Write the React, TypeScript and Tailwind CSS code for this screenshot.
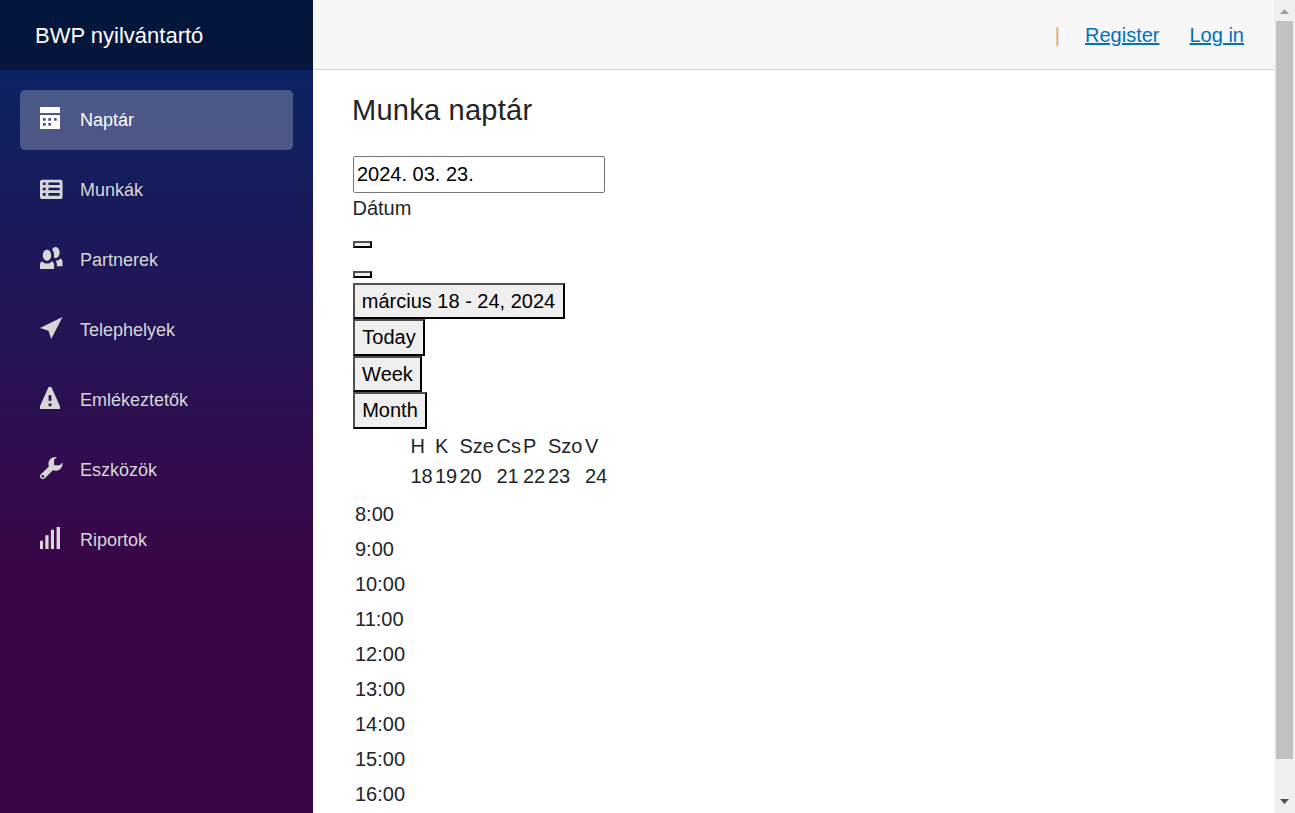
import React from "react";

type NavItem = { label: string; path: string; active?: boolean; narrow?: boolean };

const NAV: NavItem[] = [
  {
    label: "Naptár",
    active: true,
    narrow: true,
    path: "M0 0v2.18h7v-2.18h-7zm0 2.91v5.09h7v-5.09h-7zm1.05 1.09h.95v1h-.95v-1zm1.85 0h.95v1h-.95v-1zm2 0h.95v1h-.95v-1zm-3.85 1.85h.95v1h-.95v-1zm1.85 0h.95v1h-.95v-1z",
  },
  {
    label: "Munkák",
    path: "M.75 1c-.41 0-.75.34-.75.75v5.5c0 .41.34.75.75.75h6.5c.41 0 .75-.34.75-.75v-5.5c0-.41-.34-.75-.75-.75h-6.5zm.25 1h1v.95h-1v-.95zm2 0h4v.95h-4v-.95zm-2 1.9h1v.95h-1v-.95zm2 0h4v.95h-4v-.95zm-2 1.95h1v.95h-1v-.95zm2 0h4v.95h-4v-.95z",
  },
  {
    label: "Partnerek",
    path: "M5.5 0c-.51 0-.95.35-1.22.88.45.54.72 1.28.72 2.13 0 .29-.03.55-.09.81.19.11.38.19.59.19.83 0 1.5-.9 1.5-2 0-1.1-.67-2-1.5-2zm-3 1c-.83 0-1.5.9-1.5 2s.67 2 1.5 2 1.5-.9 1.5-2-.67-2-1.5-2zm4.75 3.16c-.43.51-1.02.82-1.69.84.27.38.44.84.44 1.34v.66h2v-1.66c0-.52-.31-.97-.75-1.19zm-6.5 1c-.44.22-.75.67-.75 1.19v1.66h5v-1.66c0-.52-.31-.97-.75-1.19-.45.53-1.06.84-1.75.84s-1.3-.32-1.75-.84z",
  },
  { label: "Telephelyek", path: "M8 0l-8 4 3 1 1 3 4-8z" },
  {
    label: "Emlékeztetők",
    narrow: true,
    path: "M3.09 0c-.06 0-.1.04-.13.09l-2.94 6.81c-.02.05-.03.13-.03.19v.81c0 .05.04.09.09.09h6.81c.05 0 .09-.04.09-.09v-.81c0-.05-.01-.14-.03-.19l-2.94-6.81c-.02-.05-.07-.09-.13-.09h-.81zm-.09 3h1v2h-1v-2zm0 3h1v1h-1v-1z",
  },
  {
    label: "Eszközök",
    path: "M5.5 0c-1.38 0-2.5 1.12-2.5 2.5 0 .32.08.62.19.91l-2.91 2.88c-.39.39-.39 1.05 0 1.44.2.2.46.28.72.28.26 0 .52-.09.72-.28l2.88-2.91c.28.11.58.19.91.19 1.38 0 2.5-1.12 2.5-2.5 0-.16 0-.32-.03-.47l-.97.97h-2v-2l.97-.97c-.15-.03-.31-.03-.47-.03zm-4.5 6.5c.28 0 .5.22.5.5s-.22.5-.5.5-.5-.22-.5-.5.22-.5.5-.5z",
  },
  {
    label: "Riportok",
    narrow: true,
    path: "M5.8 0v8h1.2v-8h-1.2zm-2 1v7h1.1v-7h-1.1zm-1.95 2v5h1.15v-5h-1.15zm-1.85 2v3h1.05v-3h-1.05z",
  },
];

const DAYS = [
  ["H", "18"],
  ["K", "19"],
  ["Sze", "20"],
  ["Cs", "21"],
  ["P", "22"],
  ["Szo", "23"],
  ["V", "24"],
];

const HOURS = ["8:00", "9:00", "10:00", "11:00", "12:00", "13:00", "14:00", "15:00", "16:00"];

const BEVEL = "border-2 border-t-[#505050] border-l-[#505050] border-r-black border-b-black bg-[#efefef]";

function Sidebar() {
  return (
    <aside className="flex w-[313px] shrink-0 flex-col bg-[linear-gradient(180deg,rgb(5,39,103)_0%,#3a0647_70%)]">
      <div className="flex h-[70px] shrink-0 items-center bg-black/40 pl-[35px] text-[22px] text-white">
        BWP nyilvántartó
      </div>
      <nav className="flex flex-col gap-2.5 px-5 pt-5">
        {NAV.map((item) => (
          <a
            key={item.label}
            className={
              item.active
                ? "flex h-[60px] items-center rounded-[5px] bg-white/25 pl-5 text-[18px] text-white"
                : "flex h-[60px] items-center rounded-[5px] pl-5 text-[18px] text-[#d7d7d7]"
            }
          >
            <span className="-mt-1 w-10 shrink-0">
              <svg
                viewBox={item.narrow ? "0 0 7 8" : "0 0 8 8"}
                preserveAspectRatio="none"
                className={item.narrow ? "block h-[22px] w-5" : "block h-[22px] w-[22.5px]"}
                fill="currentColor"
                fillRule="evenodd"
              >
                <path d={item.path} />
              </svg>
            </span>
            {item.label}
          </a>
        ))}
      </nav>
    </aside>
  );
}

function Scrollbar() {
  return (
    <div className="flex w-[21px] shrink-0 flex-col items-center bg-[#f0f0f0]">
      <div className="flex h-[21px] items-center justify-center">
        <svg width="9" height="5" viewBox="0 0 9 5" fill="#a3a3a3" className="mt-0.5">
          <path d="M4.5 0L9 5H0z" />
        </svg>
      </div>
      <div className="h-[738px] w-[17px] bg-[#c1c1c1]" />
      <div className="mt-auto flex h-[21px] items-center justify-center">
        <svg width="9" height="5" viewBox="0 0 9 5" fill="#505050" className="-mt-0.5">
          <path d="M0 0h9L4.5 5z" />
        </svg>
      </div>
    </div>
  );
}

function Calendar() {
  return (
    <section>
      <div className="grid w-max grid-cols-[57.5px_24.5px_24.5px_37px_26.5px_25px_37px_25px] pt-0.5 leading-[30px]">
        <div />
        {DAYS.map(([name, day]) => (
          <div key={day}>
            <div>{name}</div>
            <div>{day}</div>
          </div>
        ))}
      </div>
      <div className="flex flex-col pt-1.5 pl-0.5">
        {HOURS.map((hour) => (
          <div key={hour} className="h-[35px] leading-[35px]">
            {hour}
          </div>
        ))}
      </div>
    </section>
  );
}

export default function App() {
  return (
    <div className="flex h-[813px] w-[1295px] overflow-hidden bg-white font-['Liberation_Sans',Arial,sans-serif] text-[20px] text-[#212529]">
      <Sidebar />
      <main className="flex min-w-0 flex-1 flex-col">
        <header className="flex h-[70px] shrink-0 items-center justify-end border-b border-[#d6d5d5] bg-[#f7f7f7] pr-[30px] text-[#0071c1]">
          <span className="mr-[25px] text-[#e0a878]">|</span>
          <a className="mr-[30px] underline">Register</a>
          <a className="underline">Log in</a>
        </header>
        <div className="flex flex-col items-start pl-10">
          <h3 className="mt-[22px] mb-[28px] -ml-px text-[29px] leading-9 tracking-[0.25px]">Munka naptár</h3>
          <input
            type="text"
            defaultValue="2024. 03. 23."
            className="h-[37px] w-[252px] rounded-[2px] border border-[#767676] bg-white px-[3px] text-black"
          />
          <label className="-ml-[0.5px] mb-[18px] leading-[30px]">Dátum</label>
          <button className={`${BEVEL} h-[7px] w-[19px]`} />
          <button className={`${BEVEL} mt-[23px] mb-[5px] h-[7px] w-[19px]`} />
          <button className={`${BEVEL} h-9 w-[212px] pr-px leading-8 text-black`}>március 18 - 24, 2024</button>
          <button className={`${BEVEL} h-[37px] w-[72px] pb-px leading-8 text-black`}>Today</button>
          <button className={`${BEVEL} h-9 w-[69px] leading-8 text-black`}>Week</button>
          <button className={`${BEVEL} h-[37px] w-[74px] pb-px leading-8 text-black`}>Month</button>
          <Calendar />
        </div>
      </main>
      <Scrollbar />
    </div>
  );
}
